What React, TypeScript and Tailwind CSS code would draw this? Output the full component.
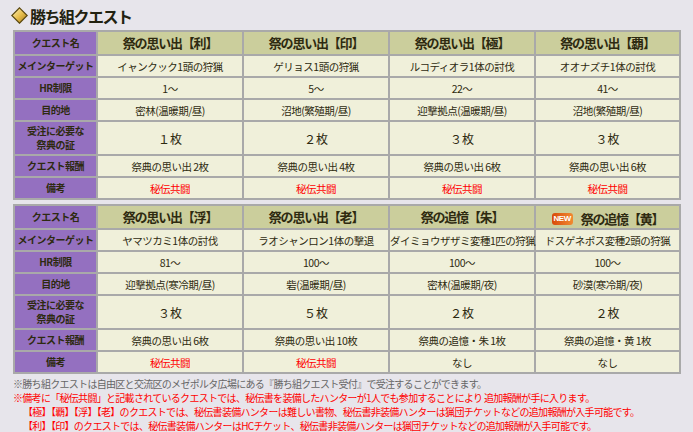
import React from 'react'

const LABELS = [
  'クエスト名',
  'メインターゲット',
  'HR制限',
  '目的地',
  '受注に必要な祭典の証',
  'クエスト報酬',
  '備考',
]

const TABLE_1 = [
  {
    name: '祭の思い出【利】',
    target: 'イャンクック1頭の狩猟',
    hr: '1～',
    place: '密林(温暖期/昼)',
    cost: '１枚',
    reward: '祭典の思い出 2枚',
    note: '秘伝共闘',
  },
  {
    name: '祭の思い出【印】',
    target: 'ゲリョス1頭の狩猟',
    hr: '5～',
    place: '沼地(繁殖期/昼)',
    cost: '２枚',
    reward: '祭典の思い出 4枚',
    note: '秘伝共闘',
  },
  {
    name: '祭の思い出【極】',
    target: 'ルコディオラ1体の討伐',
    hr: '22～',
    place: '迎撃拠点(温暖期/昼)',
    cost: '３枚',
    reward: '祭典の思い出 6枚',
    note: '秘伝共闘',
  },
  {
    name: '祭の思い出【覇】',
    target: 'オオナズチ1体の討伐',
    hr: '41～',
    place: '沼地(繁殖期/昼)',
    cost: '３枚',
    reward: '祭典の思い出 6枚',
    note: '秘伝共闘',
  },
]

const TABLE_2 = [
  {
    name: '祭の思い出【浮】',
    target: 'ヤマツカミ1体の討伐',
    hr: '81～',
    place: '迎撃拠点(寒冷期/昼)',
    cost: '３枚',
    reward: '祭典の思い出 6枚',
    note: '秘伝共闘',
  },
  {
    name: '祭の思い出【老】',
    target: 'ラオシャンロン1体の撃退',
    hr: '100～',
    place: '砦(温暖期/昼)',
    cost: '５枚',
    reward: '祭典の思い出 10枚',
    note: '秘伝共闘',
  },
  {
    name: '祭の追憶【朱】',
    target: 'ダイミョウザザミ変種1匹の狩猟',
    hr: '100～',
    place: '密林(温暖期/夜)',
    cost: '２枚',
    reward: '祭典の追憶・朱 1枚',
    note: 'なし',
  },
  {
    name: '祭の追憶【黄】',
    target: 'ドスゲネポス変種2頭の狩猟',
    hr: '100～',
    place: '砂漠(寒冷期/夜)',
    cost: '２枚',
    reward: '祭典の追憶・黄 1枚',
    note: 'なし',
    isNew: true,
  },
]

function Diamond() {
  return (
    <svg width="17" height="17" viewBox="0 0 17 17">
      <defs>
        <linearGradient id="dg" x1="0" y1="0" x2="1" y2="1">
          <stop offset="0" stopColor="#fff6c0" />
          <stop offset="0.5" stopColor="#e8c050" />
          <stop offset="1" stopColor="#a87810" />
        </linearGradient>
      </defs>
      <polygon points="8.5,0.8 16.2,8.5 8.5,16.2 0.8,8.5" fill="url(#dg)" stroke="#5a4810" strokeWidth="1.2" />
    </svg>
  )
}

function NewBadge() {
  return (
    <span className="inline-flex items-center justify-center w-[21px] h-[12px] rounded-[3px] bg-gradient-to-r from-[#d84808] to-[#f08a30] text-white text-[8px] font-bold leading-none tracking-[-0.5px] mr-[8px] [font-family:'Liberation_Sans_Narrow','Liberation_Sans',sans-serif]">
      NEW
    </span>
  )
}

function QuestTable({ quests }: { quests: any[] }) {
  const rows = ['target', 'hr', 'place', 'cost', 'reward', 'note']
  return (
    <table className="table-fixed border-separate border-spacing-[2px] bg-[#a9a9a9] w-[668px] ml-[13px]">
      <colgroup>
        <col className="w-[81px]" />
        <col className="w-[144px]" />
        <col className="w-[144px]" />
        <col className="w-[144px]" />
        <col className="w-[143px]" />
      </colgroup>
      <tbody>
        <tr>
          <th className="bg-[#9470c0] h-[22px] p-0 text-[10px] leading-[14px] font-bold tracking-[-0.5px] text-[#2e2a10]">
            {LABELS[0]}
          </th>
          {quests.map((q) => (
            <th
              key={q.name}
              className="bg-[#cbce9c] p-0 text-[13px] leading-[18px] font-bold tracking-[-1.2px] text-[#2e2a10] whitespace-nowrap"
            >
              <span className="inline-flex items-center">
                {q.isNew && <NewBadge />}
                {q.name}
              </span>
            </th>
          ))}
        </tr>
        {rows.map((key, i) => (
          <tr key={key}>
            <th
              className={`bg-[#9470c0] p-0 text-[10px] font-bold tracking-[-0.5px] text-[#2e2a10] leading-[14px] ${
                key === 'cost' ? 'h-[32px]' : 'h-[20px]'
              }`}
            >
              {key === 'cost' ? (
                <>
                  受注に必要な
                  <br />
                  祭典の証
                </>
              ) : (
                LABELS[i + 1]
              )}
            </th>
            {quests.map((q) => (
              <td
                key={q.name}
                className={`bg-[#f0f0da] p-0 text-center whitespace-nowrap leading-[15px] ${
                  key === 'cost'
                    ? 'text-[12px] text-[#2e2a10]'
                    : key === 'note' && q.note !== 'なし'
                    ? 'text-[10.5px] text-[#ff0000] tracking-[-0.5px]'
                    : 'text-[10.5px] text-[#2e2a10] tracking-[-0.5px]'
                }`}
              >
                {q[key]}
              </td>
            ))}
          </tr>
        ))}
      </tbody>
    </table>
  )
}

export default function App() {
  return (
    <div className="w-[693px] h-[432px] overflow-hidden bg-[#e7e5eb] [font-family:'Noto_Sans_CJK_JP',sans-serif]">
      {/* ===== タイトル ===== */}
      <div className="h-[30px] flex items-center pl-[11px] pt-[1px]">
        <Diamond />
        <span className="ml-[2px] text-[16px] font-bold tracking-[-1.5px] text-[#222210]">
          勝ち組クエスト
        </span>
      </div>

      <QuestTable quests={TABLE_1} />
      <div className="h-[4px]" />
      <QuestTable quests={TABLE_2} />

      {/* ===== 注意書き ===== */}
      <div className="mt-[3px] ml-[13px] text-[10px] leading-[14px] tracking-[-0.7px]">
        <p className="text-[#666666]">
          ※勝ち組クエストは自由区と交流区のメゼポルタ広場にある『勝ち組クエスト受付』で受注することができます。
        </p>
        <p className="text-[#ff0000]">
          ※備考に「秘伝共闘」と記載されているクエストでは、秘伝書を装備したハンターが1人でも参加することにより 追加報酬が手に入ります。
        </p>
        <p className="text-[#ff0000] pl-[10px]">
          【極】【覇】【浮】【老】のクエストでは、秘伝書装備ハンターは難しい書物、秘伝書非装備ハンターは猟団チケットなどの追加報酬が入手可能です。
        </p>
        <p className="text-[#ff0000] pl-[10px]">
          【利】【印】のクエストでは、秘伝書装備ハンターはHCチケット、秘伝書非装備ハンターは猟団チケットなどの追加報酬が入手可能です。
        </p>
      </div>
    </div>
  )
}
